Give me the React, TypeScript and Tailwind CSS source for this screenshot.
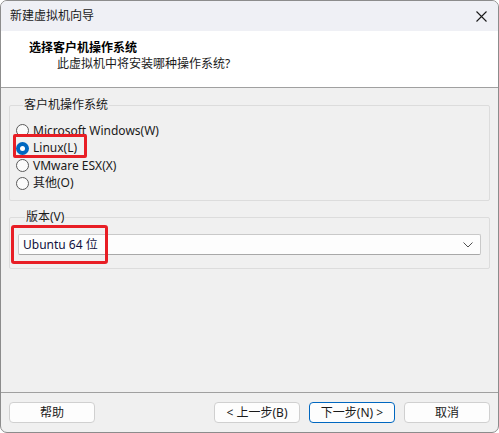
import React from "react";

const font = {
  fontFamily: '"Noto Sans", "Noto Sans CJK SC", sans-serif',
};

function Radio({ checked, label }: { checked?: boolean; label: string }) {
  return (
    <div className="flex h-[17.5px] items-center">
      {checked ? (
        <span className="flex h-[13px] w-[13px] items-center justify-center rounded-full bg-[#0067c0]">
          <span className="h-[5px] w-[5px] rounded-full bg-white" />
        </span>
      ) : (
        <span className="h-[13px] w-[13px] rounded-full border border-[#5a5a5a] bg-[#fbfbfb]" />
      )}
      <span className="ml-[4px] text-[12px] leading-none text-[#1a1a1a]">{label}</span>
    </div>
  );
}

function Button({ children, primary }: { children: React.ReactNode; primary?: boolean }) {
  return (
    <button
      className={
        primary
          ? "flex h-[21px] w-[86px] items-center justify-center rounded-[4px] border border-[#0067c0] bg-[#fdfdfd] text-[12px] leading-none text-[#1a1a1a]"
          : "flex h-[21px] w-[86px] items-center justify-center rounded-[4px] border border-[#d0d0d0] bg-[#fdfdfd] text-[12px] leading-none text-[#1a1a1a]"
      }
    >
      {children}
    </button>
  );
}

export default function App() {
  return (
    <div
      style={font}
      className="flex h-[433px] w-[499px] flex-col overflow-hidden rounded-[7px] border border-[#8c8c8c] bg-[#f0f0f0]"
    >
      {/* title bar */}
      <div className="flex h-[30px] shrink-0 items-center justify-between bg-[#eff0f5] pl-[9px] pr-[10px]">
        <span className="text-[12px] leading-none text-[#1a1a1a]">新建虚拟机向导</span>
        <svg width="11" height="11" viewBox="0 0 11 11" className="mr-[1px]">
          <path d="M0.5 0.5 L10.5 10.5 M10.5 0.5 L0.5 10.5" stroke="#1a1a1a" strokeWidth="1.1" fill="none" />
        </svg>
      </div>

      {/* header */}
      <div className="flex h-[57px] shrink-0 flex-col border-b border-[#a0a0a0] bg-white pl-[28px] pt-[10px]">
        <span className="text-[12px] font-bold leading-[14px] text-black">选择客户机操作系统</span>
        <span className="ml-[28px] mt-[2px] text-[12px] leading-[14px] text-[#1a1a1a]">此虚拟机中将安装哪种操作系统?</span>
      </div>

      {/* body */}
      <div className="flex flex-1 flex-col px-[8px] pt-[9px]">
        <fieldset className="h-[104px] rounded-[2px] border border-[#dcdcdc] px-[6px]">
          <legend className="ml-[7px] px-px text-[12px] leading-[16px] text-[#1a1a1a]">客户机操作系统</legend>
          <div className="relative mt-[9px] flex flex-col">
            <Radio label="Microsoft Windows(W)" />
            <div className="relative">
              <Radio checked label="Linux(L)" />
              <div className="pointer-events-none absolute left-[-3px] top-[-6px] h-[24px] w-[74px] rounded-[2px] border-[3px] border-[#e81e25]" />
            </div>
            <Radio label="VMware ESX(X)" />
            <Radio label="其他(O)" />
          </div>
        </fieldset>

        <fieldset className="mt-[8px] h-[60px] rounded-[2px] border border-[#dcdcdc] px-[8px]">
          <legend className="ml-[7px] px-px text-[12px] leading-[16px] text-[#1a1a1a]">版本(V)</legend>
          <div className="relative mt-[9px]">
            <div className="flex h-[21px] w-[463px] items-center justify-between rounded-[2px] border border-[#c9c9c9] border-b-[#a8a8a8] bg-[#fdfdfd] pl-[4px] pr-[7px]">
              <span className="text-[12px] leading-none text-[#101040]">Ubuntu 64 位</span>
              <svg width="10" height="6" viewBox="0 0 10 6">
                <path d="M0.5 0.5 L5 5 L9.5 0.5" stroke="#505050" strokeWidth="1" fill="none" />
              </svg>
            </div>
            <div className="pointer-events-none absolute left-[-7px] top-[-9px] h-[39px] w-[97px] rounded-[3px] border-[3px] border-[#e81e25]" />
          </div>
        </fieldset>

        <div className="flex-1" />
      </div>

      {/* footer */}
      <div className="flex h-[40px] shrink-0 items-start border-t border-[#a0a0a0] px-[8px] pt-[9px]">
        <Button>帮助</Button>
        <div className="flex-1" />
        <Button>&lt; 上一步(B)</Button>
        <div className="w-[9px]" />
        <Button primary>下一步(N) &gt;</Button>
        <div className="w-[9px]" />
        <Button>取消</Button>
      </div>
    </div>
  );
}
